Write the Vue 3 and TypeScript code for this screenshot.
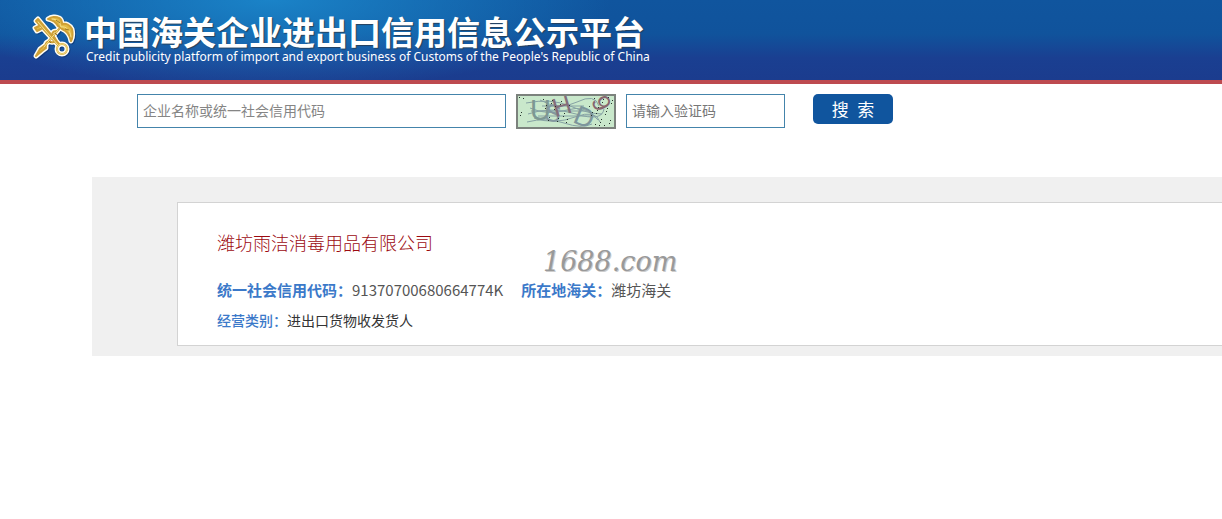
<script setup lang="ts">
import { ref } from 'vue'

interface Field {
  label: string
  value: string
}

const keyword = ref('')
const code = ref('')

const company = '潍坊雨洁消毒用品有限公司'
const registration: Field[] = [
  { label: '统一社会信用代码：', value: '91370700680664774K' },
  { label: '所在地海关：', value: '潍坊海关' },
]
const category: Field = { label: '经营类别：', value: '进出口货物收发货人' }

// Speckles scattered over the captcha background
const specks = Array.from({ length: 44 }, (_, i) => ({
  x: 3 + ((i * 37 + (i % 5) * 11) % 94),
  y: 3 + ((i * 17 + (i % 7) * 5) % 29),
}))
</script>

<template>
  <div class="page">
    <header class="banner">
      <svg class="emblem" viewBox="0 0 46 48" aria-hidden="true">
        <defs>
          <g id="emblem-shape" stroke-linecap="round" stroke-linejoin="round">
            <path d="M28 13 C26 9 23 7 18 6 C21 4 26 3 29 5 C31 6 32 8 32 11 C36 10 40 12 42 16 C43 20 43 24 41 28 C40 22 37 18 32 16 Z" />
            <path d="M6 8 L8 6 L29 31 L28 32 Z" />
            <path d="M9 13 L5 15 L7 18 L11 16" />
            <path fill="none" d="M29 16 L12 36" />
            <path d="M14 33 L16 35 L12 38 L6 43 L10 36 Z" />
            <path fill="none" d="M27 18 C22 18 21 21 24 24 C27 27 25 30 21 29 C17 28 15 30 16 33" />
            <circle fill="none" cx="32" cy="36" r="5" />
          </g>
        </defs>
        <use href="#emblem-shape" x="1" y="1" stroke="#0b2a66" stroke-opacity="0.5" stroke-width="5" />
        <use href="#emblem-shape" fill="#fffdf2" stroke="#fffdf2" stroke-width="5" />
        <use href="#emblem-shape" fill="#e3bb45" stroke="#cfa036" stroke-width="2" />
        <g fill="none" stroke="#f8e58e" stroke-width="1" stroke-linecap="round">
          <path d="M8 9 L28 32 M28 17 L14 34 M22 6 C28 6 30 10 31 14 C36 13 40 17 41 24" />
          <circle cx="32" cy="36" r="5" />
        </g>
        <path d="M25 20 L27 22 M19 28 L21 30 M26 7 L30 10 M35 16 L39 17" fill="none" stroke="#9c7723" stroke-width="1" />
      </svg>
      <div class="brand">
        <h1>中国海关企业进出口信用信息公示平台</h1>
        <p>Credit publicity platform of import and export business of Customs of the People's Republic of China</p>
      </div>
    </header>

    <form class="search" @submit.prevent>
      <input v-model="keyword" class="keyword" type="text" aria-label="企业名称或统一社会信用代码" placeholder="企业名称或统一社会信用代码" />
      <svg class="captcha" viewBox="0 0 100 35" role="img" aria-label="验证码">
        <rect x="1" y="1" width="98" height="33" fill="#c9e8cb" />
        <g fill="none" stroke="#86a2a4" stroke-width="1">
          <path d="M10 9 Q35 4 54 12 T86 20" />
          <path d="M14 14 Q32 22 51 16 T82 26" />
          <path d="M12 20 Q34 12 60 20 T88 15" />
          <path d="M18 24 Q38 31 59 23 T84 28" />
          <path d="M11 28 Q30 23 48 29 T76 30" />
          <path d="M24 6 Q43 17 61 8 T83 12" />
          <path d="M15 17 H72 M22 22 H78 M26 12 H68" />
        </g>
        <g class="glyphs">
          <text x="14" y="26" font-size="29" fill="#7d9893">U</text>
          <text x="29" y="27" font-size="24" fill="#83979f" transform="rotate(9 35 18)">S</text>
          <text x="37" y="21" font-size="26" fill="#846f7b" transform="rotate(-16 46 14)">H</text>
          <text x="58" y="32" font-size="27" fill="#7d969c" transform="rotate(22 67 24)">D</text>
          <text x="77" y="17" font-size="25" fill="#87666f" transform="rotate(65 84 10)">9</text>
        </g>
        <rect v-for="(dot, i) in specks" :key="i" :x="dot.x" :y="dot.y" width="1" height="1" fill="#27352d" />
        <rect x="1" y="1" width="98" height="33" fill="none" stroke="#7c827d" stroke-width="2" />
      </svg>
      <input v-model="code" class="code" type="text" aria-label="请输入验证码" placeholder="请输入验证码" />
      <button type="submit">搜&ensp;索</button>
    </form>

    <main class="results">
      <article class="card">
        <h2>{{ company }}</h2>
        <dl class="line registration">
          <div v-for="item in registration" :key="item.label">
            <dt>{{ item.label }}</dt>
            <dd>{{ item.value }}</dd>
          </div>
        </dl>
        <dl class="line category">
          <div>
            <dt>{{ category.label }}</dt>
            <dd>{{ category.value }}</dd>
          </div>
        </dl>
        <span class="watermark">1688.com</span>
      </article>
    </main>
  </div>
</template>

<style>
body {
  background: #fff;
}
</style>

<style scoped>
.page {
  overflow-x: hidden;
  font-family: "Liberation Sans", "Noto Sans CJK SC", sans-serif;
}

.banner {
  display: flex;
  align-items: flex-start;
  box-sizing: border-box;
  min-height: 84px;
  padding: 13px 30px 0;
  gap: 8px;
  border-bottom: 4px solid #bd4a50;
  background:
    radial-gradient(ellipse 340px 90px at 270px 0, rgba(28, 139, 207, 0.85), rgba(28, 139, 207, 0)),
    linear-gradient(#10559e 0, #10539c 34px, #1a3f91 58px, #1b3c8e 80px);
}

.emblem {
  flex: none;
  width: 46px;
  height: 48px;
}

.brand {
  color: #fff;
  white-space: nowrap;
}

.brand h1 {
  margin: 0;
  font-family: "Noto Sans CJK SC", sans-serif;
  font-size: 33px;
  font-weight: 700;
  line-height: 37px;
  text-shadow: 1px 1px 1px #26405c;
}

.brand p {
  margin: 0;
  padding-left: 2px;
  font-family: "Noto Sans", "Liberation Sans", sans-serif;
  font-size: 12px;
  line-height: 13px;
}

.search {
  display: flex;
  align-items: flex-start;
  gap: 10px;
  padding: 10px 20px 0 137px;
}

.search input {
  box-sizing: border-box;
  height: 34px;
  padding: 0 5px 2px;
  border: 1px solid #4484ab;
  border-radius: 0;
  background: #fff;
  color: #333;
  font-family: "Noto Sans CJK SC", sans-serif;
  font-size: 14px;
  outline: none;
}

.search input::placeholder {
  color: #858585;
  opacity: 1;
}

.search .keyword {
  flex: 0 1 369px;
  min-width: 0;
}

.search .code {
  flex: 0 1 159px;
  min-width: 0;
}

.search .code::placeholder {
  color: #777;
}

.captcha {
  flex: none;
  width: 100px;
  height: 35px;
}

.glyphs {
  font-family: "Liberation Sans", sans-serif;
}

.search button {
  flex: none;
  width: 80px;
  height: 30px;
  margin-left: 18px;
  padding: 0;
  border: 0;
  border-radius: 5px;
  background: #10559e;
  color: #fff;
  font-family: "Noto Sans CJK SC", sans-serif;
  font-size: 17px;
  line-height: 30px;
  cursor: pointer;
}

.results {
  margin: 48px 0 0 92px;
  padding: 25px 0 10px 85px;
  background: #f0f0f0;
}

.card {
  position: relative;
  padding: 24px 39px 10px;
  border: 1px solid #d3d3d3;
  border-right: 0;
  background: #fff;
  font-family: "Noto Sans CJK SC", sans-serif;
}

.card h2 {
  margin: 0 0 18px;
  color: #9c0a10;
  font-size: 18px;
  font-weight: 300;
  line-height: 30px;
}

.line {
  display: flex;
  gap: 18px;
  margin: 0;
  line-height: 30px;
}

.line div {
  display: flex;
}

.line dt {
  color: #3b79c9;
  font-weight: 700;
}

.line dd {
  margin: 0;
}

.registration {
  font-size: 15px;
}

.registration dd {
  color: #555;
}

.category {
  font-size: 14px;
}

.category dt {
  font-weight: 500;
}

.category dd {
  color: #333;
}

.watermark {
  position: absolute;
  top: 43px;
  left: 365px;
  color: #999;
  font-family: "DejaVu Serif", serif;
  font-size: 27px;
  font-style: italic;
  line-height: 32px;
  text-shadow: 1px 1px 0 #ccc;
}
</style>
